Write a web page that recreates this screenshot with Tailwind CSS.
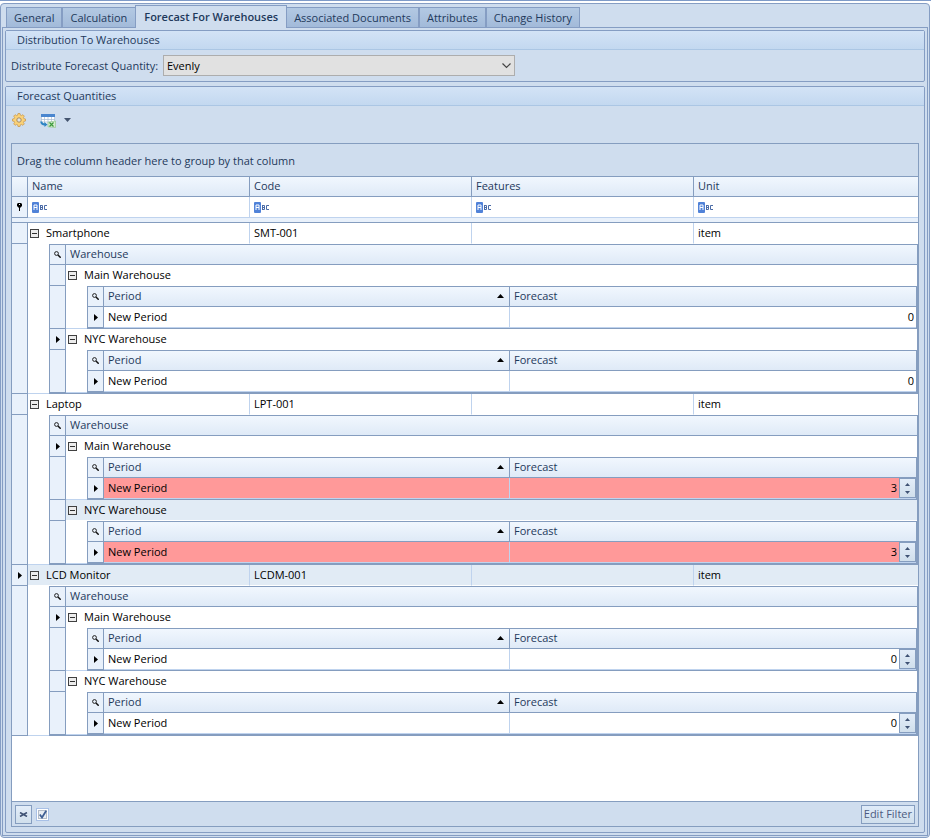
<!DOCTYPE html>
<html lang="en">
<head>
  <meta charset="UTF-8" />
  <meta name="viewport" content="width=device-width, initial-scale=1.0" />
  <title>Forecast For Warehouses</title>
  <script src="https://cdn.jsdelivr.net/npm/@tailwindcss/browser@4"></script>
</head>
<body class="h-screen flex flex-col bg-white font-['Open_Sans','Noto_Sans',sans-serif] text-[11px] leading-4 text-[#1e395b]">
  <!-- icons shared by the grid rows -->
  <svg class="hidden">
    <symbol id="i-abc" viewBox="0 0 16 11">
      <rect width="7" height="11" rx="1" fill="#5082d8" />
      <path d="M2 8V3h3v5M2 5.5h3" fill="none" stroke="#fff" />
      <path d="M8.5 3v5M8.5 3.5h2v4h-2M8.5 5.5h2M15 3.5h-2.5v4H15" fill="none" stroke="#4a6ba6" />
    </symbol>
    <symbol id="i-search" viewBox="0 0 7 7">
      <circle cx="2.5" cy="2.5" r="1.9" fill="none" stroke="#222" />
      <path d="M4 4L6.7 6.7" stroke="#111" stroke-width="1.5" />
    </symbol>
    <symbol id="i-arrow" viewBox="0 0 4 7">
      <path d="M0 0L4 3.5L0 7Z" fill="#000" />
    </symbol>
    <symbol id="i-minus" viewBox="0 0 9 9">
      <rect x=".5" y=".5" width="8" height="8" fill="#ececec" stroke="#404040" />
      <path d="M2 4.5h5" stroke="#303030" />
    </symbol>
    <symbol id="i-pin" viewBox="0 0 5 8">
      <path d="M0 1L1 0H4L5 1V3L3 5V8H2V5L0 3Z" fill="#000" />
      <path d="M2 1.5h1" stroke="#fff" />
    </symbol>
  </svg>

  <div class="h-[3px] shrink-0 border-t border-[#7f9bc8]"></div>
  <main class="flex-1 min-h-0 flex flex-col mr-px px-px pb-px pt-px border border-[#859dc3] rounded-sm bg-[#cfddee]">
    <nav class="flex items-end pl-1 shrink-0 relative z-10 -mb-px" role="tablist">
      <button role="tab" class="h-[21px] px-[7px] border border-[#859dc3] bg-linear-to-b from-[#b3c9e3] to-[#a2bad9]">General</button>
      <button role="tab" class="h-[21px] pl-[7px] pr-2 border border-r-0 border-[#859dc3] bg-linear-to-b from-[#b3c9e3] to-[#a2bad9]">Calculation</button>
      <button role="tab" aria-selected="true" class="h-[23px] px-2 pb-px border border-b-0 border-[#859dc3] bg-[#cfddee] font-semibold">Forecast For Warehouses</button>
      <button role="tab" class="h-[21px] px-[7px] border border-l-0 border-[#859dc3] bg-linear-to-b from-[#b3c9e3] to-[#a2bad9]">Associated Documents</button>
      <button role="tab" class="h-[21px] px-[7px] border border-[#859dc3] bg-linear-to-b from-[#b3c9e3] to-[#a2bad9]">Attributes</button>
      <button role="tab" class="h-[21px] px-[7px] border border-[#859dc3] bg-linear-to-b from-[#b3c9e3] to-[#a2bad9]">Change History</button>
    </nav>

    <div class="flex-1 min-h-0 flex flex-col gap-1 p-0.5 border border-[#859dc3]">
      <section class="shrink-0 border border-[#859dc3] rounded-xs">
        <h2 class="h-[19px] pl-[11px] pt-px border-b border-[#abc6e4] bg-linear-to-b from-[#d3e3f6] to-[#c3d8f0]">Distribution To Warehouses</h2>
        <div class="flex items-center h-[31px] pl-[5px]">
          <label for="distribute" class="w-[152px]">Distribute Forecast Quantity:</label>
          <div class="relative">
            <select id="distribute" class="block appearance-none w-[352px] h-[21px] pl-[3px] border border-[#adadad] bg-[#e1e1e1] text-black">
              <option>Evenly</option>
            </select>
            <svg class="absolute right-1 top-2 w-[9px] h-[6px] pointer-events-none" viewBox="0 0 9 6"><path d="M.5 .5L4.5 4.5L8.5 .5" fill="none" stroke="#444" stroke-width="1.2" /></svg>
          </div>
        </div>
      </section>

      <section class="flex-1 min-h-0 flex flex-col border border-[#859dc3] rounded-xs">
        <h2 class="h-[19px] shrink-0 pl-[11px] pt-px border-b border-[#abc6e4] bg-linear-to-b from-[#d3e3f6] to-[#c3d8f0]">Forecast Quantities</h2>
        <div class="h-[37px] shrink-0 flex items-start pl-1.5 pt-[7px]">
          <button aria-label="Settings">
            <svg class="w-3.5 h-3.5" viewBox="0 0 14 14">
              <path d="M6 .5h2l.4 1.7 1 .4 1.5-.9 1.4 1.4-.9 1.5.4 1 1.7.4v2l-1.7.4-.4 1 .9 1.5-1.4 1.4-1.5-.9-1 .4-.4 1.7H6l-.4-1.7-1-.4-1.5.9-1.4-1.4.9-1.5-.4-1L.5 8V6l1.7-.4.4-1-.9-1.5 1.4-1.4 1.5.9 1-.4z" fill="#fbd277" stroke="#c99a55" stroke-width=".8" />
              <circle cx="7" cy="7" r="2.2" fill="#dfe5ea" stroke="#a98a5c" />
            </svg>
          </button>
          <button aria-label="Export" class="flex ml-3.5">
            <svg class="w-4 h-3.5 mt-px" viewBox="0 0 16 14">
              <rect x="1" y="1" width="14" height="9" fill="#fff" />
              <rect x="1" y="0" width="14" height="3" fill="#4a86cf" />
              <path d="M1 5.5h14M1 8h14M4.5 3v7M8 3v7M11.5 3v7M1.5 3v7M14.5 3v5" stroke="#a9bcd2" stroke-width=".7" />
              <path d="M1.2 7.5Q1.5 10.5 5 10.5" fill="none" stroke="#2d84c4" stroke-width="2" />
              <path d="M4.5 8L7.5 10.5L4.5 13Z" fill="#2d84c4" />
              <path d="M8 8.2L15.5 7V13.5L8 12.8Z" fill="#d5ebce" stroke="#8cc284" stroke-width=".6" />
              <path d="M9.5 8.5l4 4M13.5 8.5l-4 4" stroke="#3c9a3c" stroke-width="1.2" />
            </svg>
            <svg class="w-[7px] h-1 ml-2 mt-[5px]" viewBox="0 0 7 4"><path d="M0 0H7L3.5 4Z" fill="#44546f" /></svg>
          </button>
        </div>

        <div class="flex-1 min-h-0 flex flex-col mx-[5px] mb-[5px] border border-[#859dbf]">
          <p class="h-8 shrink-0 pl-[5px] pt-[9px]">Drag the column header here to group by that column</p>
          <div class="flex-1 min-h-0 bg-white border-y border-[#859dbf]">
            <table class="w-full table-fixed border-separate border-spacing-0">
              <colgroup><col class="w-4" /><col class="w-[222px]" /><col class="w-[222px]" /><col class="w-[222px]" /><col /></colgroup>
              <thead id="head"></thead>
              <tbody id="rows" class="text-black"></tbody>
            </table>
          </div>
          <div class="h-6 shrink-0 flex items-center justify-between px-[3px]">
            <div class="flex items-center gap-1">
              <button aria-label="Clear filter" class="w-[17px] h-[19px] flex items-center justify-center border border-[#859dbf] bg-linear-to-b from-[#e3edf9] to-[#d0dfec]">
                <svg class="w-[9px] h-[5px]" viewBox="0 0 9 5"><path d="M1 .5L8 4.5M8 .5L1 4.5" stroke="#3f5274" stroke-width="1.6" /></svg>
              </button>
              <label class="relative w-[13px] h-[13px]">
                <input type="checkbox" checked aria-label="Filter active" class="block appearance-none w-[13px] h-[13px] border border-[#a8c0e6] bg-[#e8edf3] shadow-[inset_0_0_0_1px_#fff,inset_0_0_0_2px_#b4bcc8]" />
                <svg class="absolute left-[3px] top-0.5 w-2 h-[9px] pointer-events-none" viewBox="0 0 8 9"><path d="M.8 4.5L3 7.5L7.2 .8" fill="none" stroke="#3f5f94" stroke-width="1.8" /></svg>
              </label>
            </div>
            <button class="h-[19px] px-0.5 border border-[#859dbf] bg-linear-to-b from-[#dfebf9] to-[#d0dfec] text-[#4c5b80]">Edit Filter</button>
          </div>
        </div>
      </section>
    </div>
  </main>

  <script>
    const items = [
      { name: "Smartphone", code: "SMT-001", warehouses: [
        { name: "Main Warehouse", qty: 0 },
        { name: "NYC Warehouse", qty: 0, current: true },
      ] },
      { name: "Laptop", code: "LPT-001", warehouses: [
        { name: "Main Warehouse", qty: 3, current: true, spin: true, changed: true },
        { name: "NYC Warehouse", qty: 3, spin: true, changed: true, selected: true },
      ] },
      { name: "LCD Monitor", code: "LCDM-001", current: true, selected: true, warehouses: [
        { name: "Main Warehouse", qty: 0, current: true, spin: true },
        { name: "NYC Warehouse", qty: 0, spin: true },
      ] },
    ];
    const columns = ["Name", "Code", "Features", "Unit"];

    const arrow = `<svg class="w-1 h-[7px] mx-auto"><use href="#i-arrow" /></svg>`;
    const search = `<svg class="w-[7px] h-[7px] mx-auto"><use href="#i-search" /></svg>`;
    const minus = `<button aria-label="Collapse" class="block"><svg class="w-[9px] h-[9px]"><use href="#i-minus" /></svg></button>`;

    const spinner = `
      <span class="w-[17px] h-5 flex flex-col items-center justify-center gap-[5px] border border-[#859dbf] bg-linear-to-b from-[#e3edf9] to-[#d0dfec]">
        <button aria-label="Increase"><svg class="block w-[5px] h-[3px]" viewBox="0 0 5 3"><path d="M0 3H5L2.5 0Z" fill="#3f5274" /></svg></button>
        <button aria-label="Decrease"><svg class="block w-[5px] h-[3px]" viewBox="0 0 5 3"><path d="M0 0H5L2.5 3Z" fill="#3f5274" /></svg></button>
      </span>`;

    function periodTable(w) {
      const bg = w.changed ? "bg-[#ff9999]" : "bg-white";
      return `
        <table class="w-full table-fixed border-separate border-spacing-0 border-x border-b border-[#859dbf]">
          <colgroup><col class="w-4" /><col class="w-[406px]" /><col /></colgroup>
          <thead class="text-left text-[#1e395b]">
            <tr>
              <th class="h-[21px] p-0 border-y border-r border-[#859dbf] bg-[#e9f1fb]">${search}</th>
              <th class="h-[21px] p-0 pb-px pl-1 pr-[5px] border-y border-r border-[#859dbf] bg-linear-to-b from-[#f1f7fe] to-[#dfeaf7] font-normal">
                <div class="flex items-center justify-between">Period <svg class="w-[7px] h-1" viewBox="0 0 7 4"><path d="M0 4H7L3.5 0Z" fill="#000" /></svg></div>
              </th>
              <th class="h-[21px] p-0 pb-px pl-1 border-y border-[#859dbf] bg-linear-to-b from-[#f1f7fe] to-[#dfeaf7] font-normal">Forecast</th>
            </tr>
          </thead>
          <tbody>
            <tr class="${bg}">
              <td class="h-[21px] p-0 border-b border-r border-[#859dbf] bg-[#e9f1fb]">${arrow}</td>
              <td class="h-[21px] p-0 pl-1 border-b border-r border-[#bfd3ee]">New Period</td>
              <td class="h-[21px] p-0 border-b border-[#bfd3ee]">
                <div class="flex h-5 items-center">
                  <input aria-label="Forecast, ${w.name}" value="${w.qty}" class="flex-1 min-w-0 h-4 pr-0.5 text-right" />
                  ${w.spin ? spinner : ""}
                </div>
              </td>
            </tr>
          </tbody>
        </table>`;
    }

    function warehouseRows(w) {
      return `
        <tr class="${w.selected ? "bg-[#e1ebf5]" : "bg-white"}">
          <td class="h-[21px] p-0 border-b border-r border-[#859dbf] bg-[#e9f1fb]">${w.current ? arrow : ""}</td>
          <td class="h-[21px] p-0 pl-0.5 border-b border-white"><div class="flex items-center gap-[7px]">${minus}${w.name}</div></td>
        </tr>
        <tr>
          <td class="p-0 border-b border-r border-[#859dbf] bg-[#e9f1fb]"></td>
          <td class="p-0">
            <div class="flex">
              <div class="w-[21px] shrink-0 border-b border-[#bfd3ee]"></div>
              ${periodTable(w)}
            </div>
          </td>
        </tr>`;
    }

    function itemRows(item) {
      const bg = item.selected ? "bg-[#e1ebf5]" : "bg-white";
      return `
        <tr class="${bg}">
          <td class="h-[21px] p-0 border-b border-r border-[#859dbf] bg-[#e9f1fb]">${item.current ? arrow : ""}</td>
          <td class="h-[21px] p-0 pl-0.5 border-b border-r border-b-white border-r-[#bfd3ee]"><div class="flex items-center gap-[7px]">${minus}${item.name}</div></td>
          <td class="h-[21px] p-0 pl-1 border-b border-r border-b-white border-r-[#bfd3ee]">${item.code}</td>
          <td class="h-[21px] p-0 border-b border-r border-b-white border-r-[#bfd3ee]"></td>
          <td class="h-[21px] p-0 pl-1 border-b border-white">item</td>
        </tr>
        <tr>
          <td class="p-0 border-b border-r border-[#859dbf] bg-[#e9f1fb]"></td>
          <td colspan="4" class="p-0">
            <div class="flex">
              <div class="w-[21px] shrink-0 border-b border-[#bfd3ee]"></div>
              <table class="w-full table-fixed border-separate border-spacing-0 border-x border-b border-[#859dbf]">
                <colgroup><col class="w-4" /><col /></colgroup>
                <thead class="text-left text-[#1e395b]">
                  <tr>
                    <th class="h-[21px] p-0 border-y border-r border-[#859dbf] bg-[#e9f1fb]">${search}</th>
                    <th class="h-[21px] p-0 pb-px pl-1 border-y border-[#859dbf] bg-linear-to-b from-[#f1f7fe] to-[#dfeaf7] font-normal">Warehouse</th>
                  </tr>
                </thead>
                <tbody>${item.warehouses.map(warehouseRows).join("")}</tbody>
              </table>
            </div>
          </td>
        </tr>`;
    }

    document.getElementById("head").innerHTML = `
      <tr class="text-left">
        <th class="h-5 p-0 border-b border-r border-[#859dbf] bg-linear-to-b from-[#f1f7fe] to-[#dfeaf7]"></th>
        ${columns.map((c) => `<th class="h-5 p-0 pb-px pl-1 border-b border-r last:border-r-0 border-[#859dbf] bg-linear-to-b from-[#f1f7fe] to-[#dfeaf7] font-normal">${c}</th>`).join("")}
      </tr>
      <tr>
        <td class="h-[21px] p-0 border-b border-r border-[#859dbf] bg-[#e9f1fb]"><svg class="w-[5px] h-2 mx-auto"><use href="#i-pin" /></svg></td>
        ${columns.map((c) => `
          <td class="h-[21px] p-0 pl-1 border-b border-r last:border-r-0 border-[#bfd3ee]">
            <div class="flex items-center gap-1">
              <svg class="w-4 h-[11px]"><use href="#i-abc" /></svg>
              <input aria-label="Filter ${c}" class="flex-1 min-w-0 h-4" />
            </div>
          </td>`).join("")}
      </tr>
      <tr><td colspan="5" class="h-[5px] p-0 border-b border-[#859dbf] bg-[#e9f1fb]"></td></tr>`;
    document.getElementById("rows").innerHTML = items.map(itemRows).join("");
  </script>
</body>
</html>
